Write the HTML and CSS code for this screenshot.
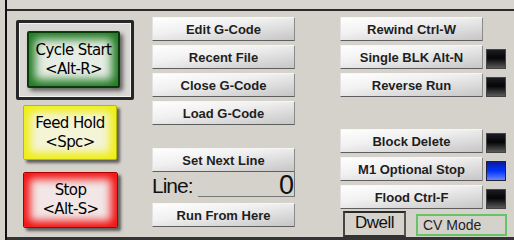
FILE: index.html
```html
<!DOCTYPE html>
<html lang="en">
<head>
    <meta charset="UTF-8">
    <title>Program Run Controls</title>
    <link rel="stylesheet" href="styles.css">
</head>
<body>
    <div class="frame">
        <div class="top"></div>
        <div class="panel">
            <div class="col col-cycle">
                <div class="cycle-frame">
                    <div class="big green">Cycle Start<br>&lt;Alt-R&gt;</div>
                </div>
                <div class="big yellow">Feed Hold<br>&lt;Spc&gt;</div>
                <div class="big red">Stop<br>&lt;Alt-S&gt;</div>
            </div>

            <div class="col col-file">
                <div class="btn">Edit G-Code</div>
                <div class="btn">Recent File</div>
                <div class="btn">Close G-Code</div>
                <div class="btn">Load G-Code</div>
                <div class="btn next-line">Set Next Line</div>
                <div class="line-row">
                    <span class="line-label">Line:</span>
                    <span class="line-value">0</span>
                </div>
                <div class="btn run-here">Run From Here</div>
            </div>

            <div class="col col-mode">
                <div class="row"><div class="btn">Rewind Ctrl-W</div></div>
                <div class="row"><div class="btn">Single BLK Alt-N</div><div class="led"></div></div>
                <div class="row"><div class="btn">Reverse Run</div><div class="led"></div></div>
                <div class="row spacer"></div>
                <div class="row"><div class="btn">Block Delete</div><div class="led"></div></div>
                <div class="row"><div class="btn">M1 Optional Stop</div><div class="led on"></div></div>
                <div class="row"><div class="btn">Flood Ctrl-F</div><div class="led"></div></div>
                <div class="status-row">
                    <div class="dwell">Dwell</div>
                    <div class="cv-mode">CV Mode</div>
                </div>
            </div>
        </div>
    </div>
</body>
</html>
```

FILE: styles.css
```css
body {
    margin: 0;
    width: 514px;
    height: 240px;
    overflow: hidden;
    background-color: #d5d2cc;
    font-family: "Liberation Sans", Arial, sans-serif;
}

.frame {
    margin-left: 5px;
    height: 240px;
    border-left: 2px solid #111;
    display: flex;
    flex-direction: column;
    box-sizing: border-box;
}

.top {
    height: 9px;
    border-bottom: 2px solid #2a2a2a;
    background: #d8d5d0;
}

.panel {
    flex: 1;
    display: flex;
    border-bottom: 3px solid #333;
}

.col {
    display: flex;
    flex-direction: column;
}

/* big coloured buttons */
.col-cycle {
    margin-left: 9px;
    padding-top: 9px;
}

.cycle-frame {
    width: 118px;
    height: 80px;
    box-sizing: border-box;
    border: 3px solid #262626;
    border-radius: 2px;
    padding: 8px 0 0 8px;
    background: #dad8d4;
    box-shadow: inset 0 0 0 1px #f2f2f0;
}

.big {
    box-sizing: border-box;
    display: flex;
    align-items: center;
    justify-content: center;
    text-align: center;
    font-family: "DejaVu Sans", Verdana, sans-serif;
    font-size: 15px;
    line-height: 19px;
    letter-spacing: -0.6px;
    color: #000;
    border-radius: 2px;
}

.green {
    width: 93px;
    height: 57px;
    background: #e6ede4;
    border: 2px solid #0a3a0c;
    box-shadow: inset 0 0 10px 6px #1f7a22, 3px 3px 4px rgba(0, 0, 0, 0.55);
}

.yellow {
    width: 94px;
    height: 55px;
    margin: 5px 0 0 7px;
    background: #f4f4d6;
    border: 1px solid #b8b800;
    box-shadow: inset 0 0 8px 6px #eeee10, 3px 3px 3px rgba(0, 0, 0, 0.55);
}

.red {
    width: 95px;
    height: 56px;
    margin: 12px 0 0 7px;
    background: #f2e6e6;
    border: 1px solid #a00;
    box-shadow: inset 0 0 8px 6px #f21010, 3px 3px 3px rgba(0, 0, 0, 0.55);
}

/* grey buttons */
.btn {
    box-sizing: border-box;
    width: 143px;
    height: 24px;
    display: flex;
    align-items: center;
    justify-content: center;
    font-size: 13px;
    font-weight: bold;
    color: #1e1e1e;
    background: linear-gradient(172deg, #ffffff 0%, #f0f0f0 40%, #c6c6c6 100%);
    border: 1px solid;
    border-color: #f6f6f6 #8a8a8a #5e5e5e #e2e2e2;
    border-radius: 1px;
}

.col-file {
    margin-left: 18px;
    padding-top: 6px;
    gap: 4px;
}

.next-line {
    margin-top: 19px;
}

.line-row {
    height: 25px;
    margin-top: -4px;
    display: flex;
    align-items: flex-end;
}

.line-label {
    width: 46px;
    font-size: 21px;
    line-height: 22px;
    color: #111;
    letter-spacing: -1px;
}

.line-value {
    flex: 1;
    height: 25px;
    box-sizing: border-box;
    text-align: right;
    font-size: 27px;
    line-height: 26px;
    color: #111;
    border-bottom: 1px solid #777;
    border-right: 1px solid #777;
}

.run-here {
    margin-top: 2px;
}

.col-mode {
    margin-left: 45px;
    padding-top: 6px;
    gap: 4px;
}

.row {
    height: 24px;
    display: flex;
    align-items: flex-end;
    gap: 3px;
}

.led {
    width: 20px;
    height: 20px;
    box-sizing: border-box;
    border: 1px solid #444;
    background: linear-gradient(#1c1c26 0%, #050505 45%, #5a5a5a 100%);
}

.led.on {
    border-color: #223;
    background: linear-gradient(#0a1a9a 0%, #0033ff 50%, #6a86ff 100%);
}

.status-row {
    display: flex;
    align-items: flex-start;
    margin-top: -2px;
}

.dwell {
    box-sizing: border-box;
    width: 63px;
    height: 26px;
    margin-left: 3px;
    border: 2px solid #333;
    border-color: #2a2a2a #555 #333 #444;
    font-size: 17px;
    line-height: 19px;
    letter-spacing: -0.5px;
    text-align: center;
    color: #111;
}

.cv-mode {
    box-sizing: border-box;
    width: 91px;
    height: 22px;
    margin: 3px 0 0 10px;
    border: 2px solid #66c466;
    font-size: 14px;
    line-height: 18px;
    padding-left: 5px;
    color: #222;
}
```
